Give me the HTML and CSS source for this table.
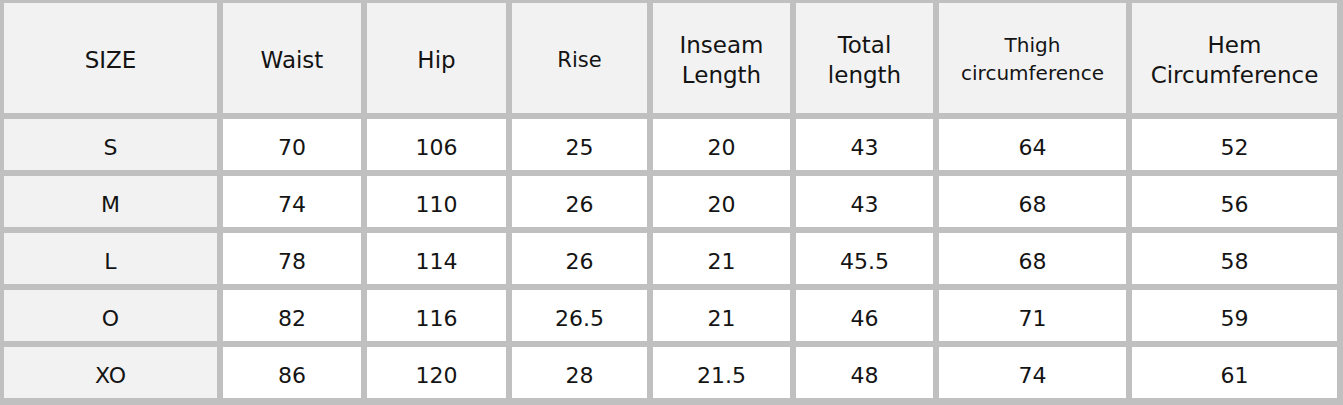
FILE: index.html
```html
<!DOCTYPE html>
<html>
<head>
<meta charset="utf-8">
<link rel="stylesheet" href="styles.css">
</head>
<body>
<div class="chart">
  <div class="cell head">SIZE</div>
  <div class="cell head">Waist</div>
  <div class="cell head">Hip</div>
  <div class="cell head small">Rise</div>
  <div class="cell head">Inseam<br>Length</div>
  <div class="cell head">Total<br>length</div>
  <div class="cell head thigh">Thigh<br>circumference</div>
  <div class="cell head">Hem<br>Circumference</div>

  <div class="cell size">S</div><div class="cell">70</div><div class="cell">106</div><div class="cell">25</div><div class="cell">20</div><div class="cell">43</div><div class="cell">64</div><div class="cell">52</div>
  <div class="cell size">M</div><div class="cell">74</div><div class="cell">110</div><div class="cell">26</div><div class="cell">20</div><div class="cell">43</div><div class="cell">68</div><div class="cell">56</div>
  <div class="cell size">L</div><div class="cell">78</div><div class="cell">114</div><div class="cell">26</div><div class="cell">21</div><div class="cell">45.5</div><div class="cell">68</div><div class="cell">58</div>
  <div class="cell size">O</div><div class="cell">82</div><div class="cell">116</div><div class="cell">26.5</div><div class="cell">21</div><div class="cell">46</div><div class="cell">71</div><div class="cell">59</div>
  <div class="cell size">XO</div><div class="cell">86</div><div class="cell">120</div><div class="cell">28</div><div class="cell">21.5</div><div class="cell">48</div><div class="cell">74</div><div class="cell">61</div>
</div>
</body>
</html>
```
FILE: styles.css
```css
html, body {
  margin: 0;
  padding: 0;
  background: #c0c0c0;
}
.chart {
  display: grid;
  grid-template-columns: 213px 138px 139px 135px 137px 137px 187px 205px;
  grid-template-rows: 110px repeat(5, 51px);
  gap: 6px;
  padding: 3px 6px 6px 4px;
  background: #c0c0c0;
  width: 1343px;
  height: 405px;
  box-sizing: border-box;
  font-family: "DejaVu Sans", sans-serif;
  color: #141414;
}
.cell {
  background: #ffffff;
  display: flex;
  align-items: center;
  justify-content: center;
  text-align: center;
  font-size: 22px;
  line-height: 26px;
  padding-top: 6px;
}
.head {
  background: #f2f2f2;
  font-size: 23px;
  line-height: 30px;
  padding-top: 3px;
}
.head.small {
  font-size: 21px;
}
.head.thigh {
  font-size: 20px;
  line-height: 28px;
  padding-top: 1px;
}
.size {
  background: #f2f2f2;
}
```
